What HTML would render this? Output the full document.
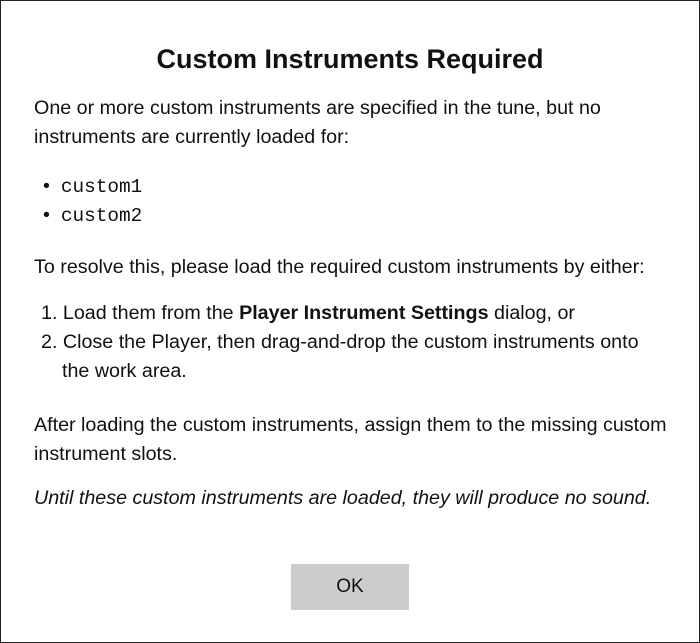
<!DOCTYPE html>
<html><head><style>
html,body{margin:0;padding:0;background:#fff}
.f{position:relative;width:698px;height:641px;border:1px solid #222;font-family:"Liberation Sans",sans-serif;font-size:19.7px;color:#111;overflow:hidden}
.l{position:absolute;left:33px;line-height:29px;white-space:nowrap}
.t{position:absolute;left:0;width:698px;text-align:center;font-weight:bold;font-size:27px;line-height:30px;top:43px}
.m{font-family:"Liberation Mono",monospace;font-size:19.4px}
.b{position:absolute;left:290px;top:563px;width:118px;height:46px;background:#ccc;text-align:center;line-height:46px;font-size:19px}
</style></head><body><div class="f">
<div class="t">Custom Instruments Required</div>
<div class="l" style="top:93px">One or more custom instruments are specified in the tune, but no</div>
<div class="l" style="top:122px">instruments are currently loaded for:</div>
<div class="l" style="top:171px;left:42px">•&nbsp; <span class="m">custom1</span></div>
<div class="l" style="top:200px;left:42px">•&nbsp; <span class="m">custom2</span></div>
<div class="l" style="top:252px">To resolve this, please load the required custom instruments by either:</div>
<div class="l" style="top:298px;left:40px">1. Load them from the <b>Player Instrument Settings</b> dialog, or</div>
<div class="l" style="top:327px;left:40px">2. Close the Player, then drag-and-drop the custom instruments onto</div>
<div class="l" style="top:356px;left:61px">the work area.</div>
<div class="l" style="top:410px">After loading the custom instruments, assign them to the missing custom</div>
<div class="l" style="top:439px">instrument slots.</div>
<div class="l" style="top:483px;font-style:italic">Until these custom instruments are loaded, they will produce no sound.</div>
<div class="b">OK</div>
</div></body></html>
